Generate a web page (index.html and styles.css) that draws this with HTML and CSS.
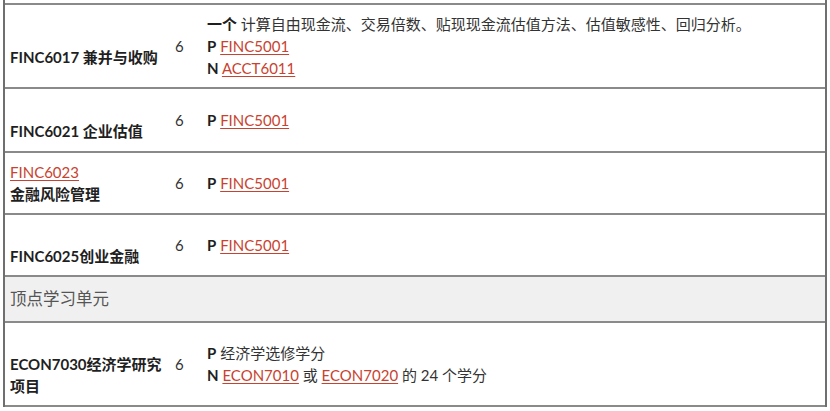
FILE: index.html
```html
<!DOCTYPE html>
<html lang="zh">
<head>
<meta charset="utf-8">
<title>课程</title>
<link rel="stylesheet" href="styles.css">
</head>
<body>
<div class="wrap">
  <table class="courses">
    <colgroup>
      <col class="c-name">
      <col class="c-credit">
      <col class="c-req">
    </colgroup>
    <tr class="r1">
      <td class="name"><br>FINC6017 兼并与收购</td>
      <td class="credit">6</td>
      <td class="req"><strong>一个</strong> 计算自由现金流、交易倍数、贴现现金流估值方法、估值敏感性、回归分析。<br><b>P</b> <a href="#">FINC5001</a><br><b>N</b> <a href="#">ACCT6011</a></td>
    </tr>
    <tr class="r2">
      <td class="name"><br>FINC6021 企业估值</td>
      <td class="credit">6</td>
      <td class="req"><b>P</b> <a href="#">FINC5001</a></td>
    </tr>
    <tr class="r3">
      <td class="name"><a href="#">FINC6023</a><br>金融风险管理</td>
      <td class="credit">6</td>
      <td class="req"><b>P</b> <a href="#">FINC5001</a></td>
    </tr>
    <tr class="r4">
      <td class="name"><br>FINC6025创业金融</td>
      <td class="credit">6</td>
      <td class="req"><b>P</b> <a href="#">FINC5001</a></td>
    </tr>
    <tr class="section">
      <td colspan="3">顶点学习单元</td>
    </tr>
    <tr class="r6">
      <td class="name"><br>ECON7030经济学研究项目</td>
      <td class="credit">6</td>
      <td class="req"><b>P</b> 经济学选修学分<br><b>N</b> <a href="#">ECON7010</a> 或 <a href="#">ECON7020</a> 的 24 个学分</td>
    </tr>
  </table>
</div>
</body>
</html>
```

FILE: styles.css
```css
html, body {
  margin: 0;
  padding: 0;
  background: #ffffff;
}

body {
  font-family: "Lato", "Noto Sans CJK SC", sans-serif;
  font-size: 15px;
  color: #2b2b2b;
}

.wrap {
  margin-left: 3px;
  width: 824px;
  box-sizing: border-box;
  padding-top: 3px;
  border-left: 2px solid #6f6f6f;
  border-right: 2px solid #6f6f6f;
}

.courses {
  width: 100%;
  border-collapse: collapse;
  table-layout: fixed;
  border-bottom: 2px solid #8a8a8a;
}

.c-name { width: 163px; }
.c-credit { width: 32px; }

.courses td {
  border-top: 2px solid #8a8a8a;
  vertical-align: middle;
  padding: 8px 0;
  line-height: 22px;
}

.name {
  padding-left: 5px !important;
  padding-right: 3px !important;
  font-weight: 700;
  color: #1f1f1f;
}

.credit {
  padding-left: 7px !important;
  color: #333;
}

.req {
  padding-left: 7px !important;
  color: #333;
}

.req b, .req strong {
  font-weight: 700;
  color: #1f1f1f;
}

.r2 td { padding-top: 9px; padding-bottom: 9px; }

a {
  color: #c8432f;
  text-decoration: underline;
  text-underline-offset: 2px;
  font-weight: 400;
}

.name a { font-weight: 400; }

.section td {
  background: #f0f0f0;
  color: #555;
  font-size: 16.5px;
  font-weight: 400;
  padding: 11px 0 11px 5px;
  line-height: 22px;
}
```
